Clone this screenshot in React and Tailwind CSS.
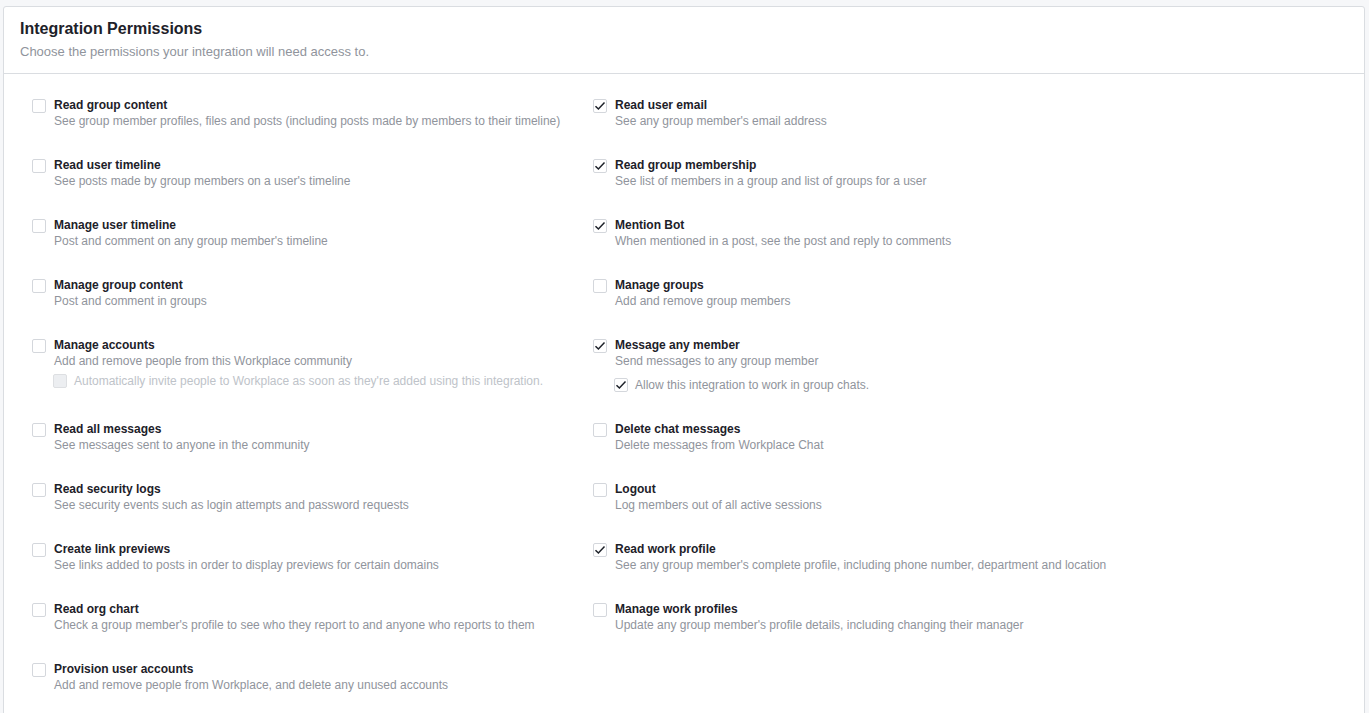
import React from "react";

const left = [
  ["Read group content", "See group member profiles, files and posts (including posts made by members to their timeline)", false],
  ["Read user timeline", "See posts made by group members on a user's timeline", false],
  ["Manage user timeline", "Post and comment on any group member's timeline", false],
  ["Manage group content", "Post and comment in groups", false],
  ["Manage accounts", "Add and remove people from this Workplace community", false, { text: "Automatically invite people to Workplace as soon as they're added using this integration.", disabled: true }],
  ["Read all messages", "See messages sent to anyone in the community", false],
  ["Read security logs", "See security events such as login attempts and password requests", false],
  ["Create link previews", "See links added to posts in order to display previews for certain domains", false],
  ["Read org chart", "Check a group member's profile to see who they report to and anyone who reports to them", false],
  ["Provision user accounts", "Add and remove people from Workplace, and delete any unused accounts", false],
];
const right = [
  ["Read user email", "See any group member's email address", true],
  ["Read group membership", "See list of members in a group and list of groups for a user", true],
  ["Mention Bot", "When mentioned in a post, see the post and reply to comments", true],
  ["Manage groups", "Add and remove group members", false],
  ["Message any member", "Send messages to any group member", true, { text: "Allow this integration to work in group chats.", checked: true }],
  ["Delete chat messages", "Delete messages from Workplace Chat", false],
  ["Logout", "Log members out of all active sessions", false],
  ["Read work profile", "See any group member's complete profile, including phone number, department and location", true],
  ["Manage work profiles", "Update any group member's profile details, including changing their manager", false],
  null,
];

function Box({ checked, disabled }) {
  return (
    <div
      className={
        "w-[14px] h-[14px] shrink-0 rounded-[2px] border flex items-center justify-center " +
        (disabled ? "border-[#dddfe2] bg-[#eceef1]" : "border-[#d4d7dc] bg-white")
      }
    >
      {checked && (
        <svg width="12" height="12" viewBox="0 0 12 12" fill="none">
          <path d="M1.5 6.2 L4.4 9 L10.5 2.6" stroke="#1d2129" strokeWidth="1.5" />
        </svg>
      )}
    </div>
  );
}

function Item({ item }) {
  if (!item) return <div />;
  const [title, desc, checked, sub] = item;
  return (
    <div className="flex">
      <div className="pt-[2px]">
        <Box checked={checked} />
      </div>
      <div className="ml-[8px]">
        <div className="text-[12px] leading-[16px] font-bold text-[#1d2129]">{title}</div>
        <div className="text-[12px] leading-[16px] text-[#90949c]">{desc}</div>
        {sub && (
          <div className={"flex items-center -ml-[1px] " + (sub.disabled ? "mt-[4px]" : "mt-[8px]")}>
            <Box checked={sub.checked} disabled={sub.disabled} />
            <span
              className={
                "ml-[7px] text-[12px] leading-[16px] " +
                (sub.disabled ? "text-[#bec3c9]" : "text-[#90949c]")
              }
            >
              {sub.text}
            </span>
          </div>
        )}
      </div>
    </div>
  );
}

export default function App() {
  return (
    <div
      className="min-h-screen bg-[#f6f7f9] pt-[6px] pl-[3px] pr-[4px]"
      style={{ fontFamily: '"Liberation Sans", Arial, sans-serif' }}
    >
      <div className="bg-white border border-[#dadde1] rounded-t-[3px]">
        <div className="px-[16px] pt-[12px] pb-[13px] border-b border-[#dadde1]">
          <div className="text-[16px] leading-[20px] font-bold text-[#1d2129]">Integration Permissions</div>
          <div className="mt-[5px] text-[13px] leading-[16px] text-[#90949c]">
            Choose the permissions your integration will need access to.
          </div>
        </div>
        <div className="pl-[28px] pt-[23px] pb-[28px] grid grid-cols-[561px_1fr] gap-y-[28px]">
          {left.map((l, i) => (
            <React.Fragment key={i}>
              <Item item={l} />
              <Item item={right[i]} />
            </React.Fragment>
          ))}
        </div>
      </div>
    </div>
  );
}
